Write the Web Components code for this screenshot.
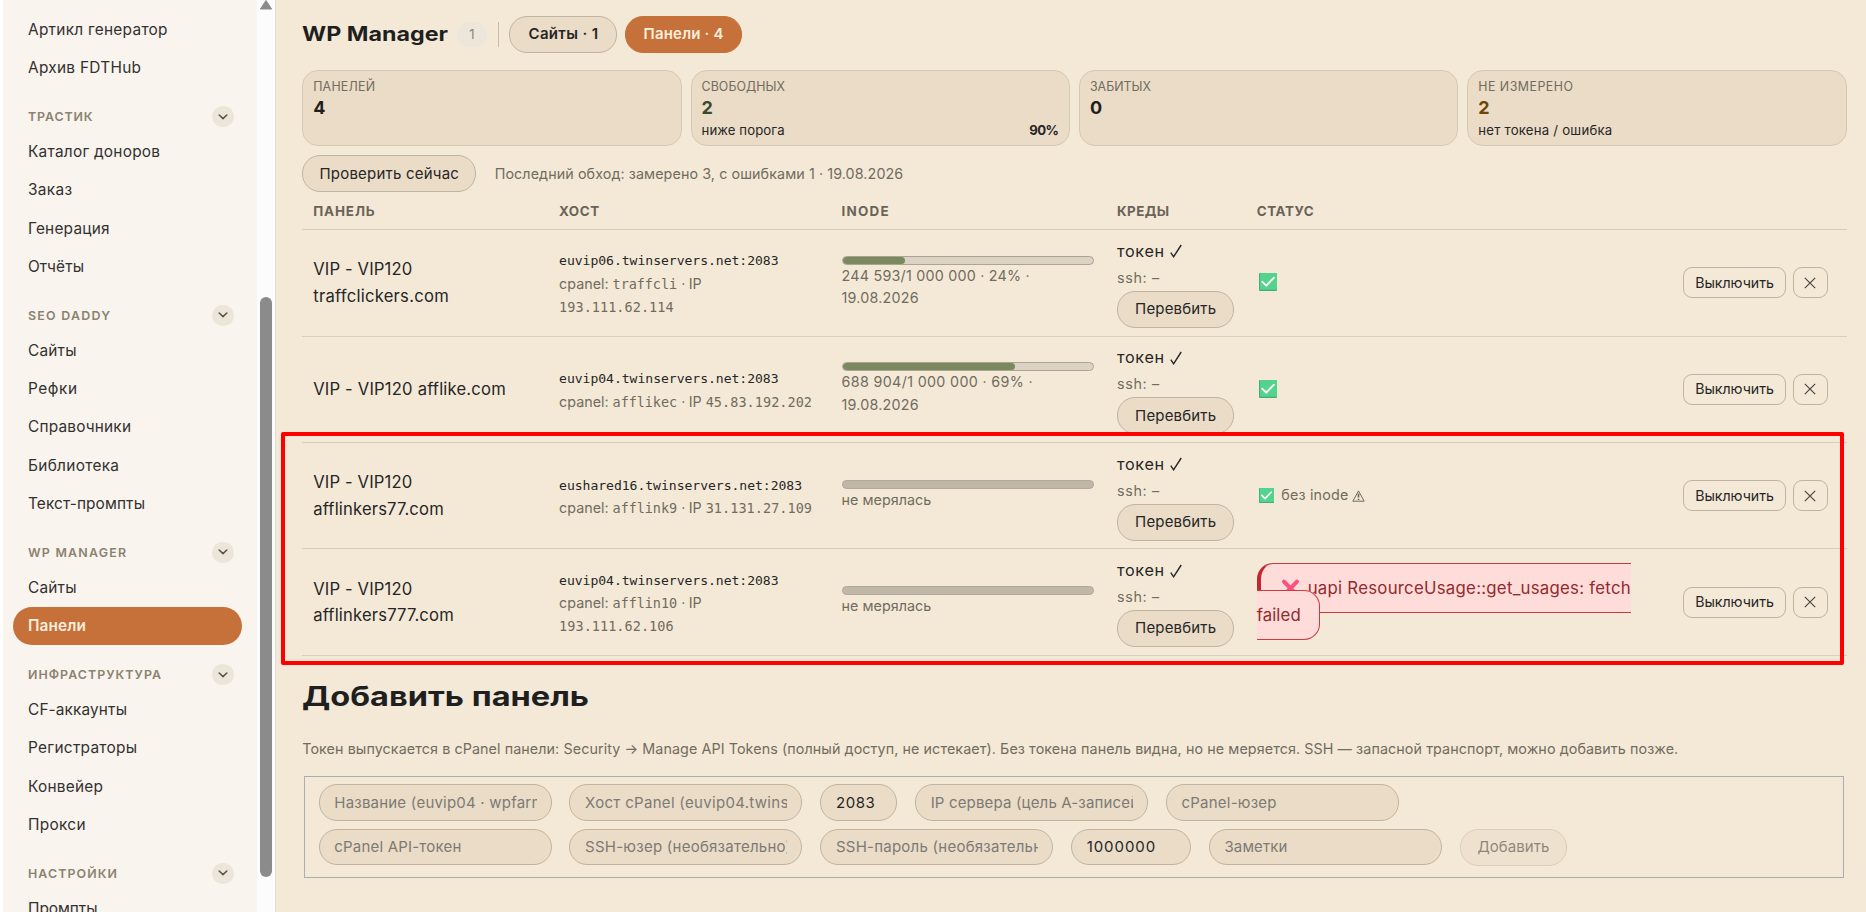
<!DOCTYPE html>
<html lang="ru">
<head>
<meta charset="utf-8">
<title>WP Manager</title>
<style>
  :root {
    --bg: #f4e9d7;
    --surface: #eadcc6;
    --ink: #262626;
    --muted: #716c60;
    --line: #d9cdbc;
    --edge: #c0b4a0;
    --accent: #c57139;
    --mono: "DejaVu Sans Mono", "Liberation Mono", monospace;
  }
  body {
    margin: 0;
    height: 912px;
    overflow: hidden;
    background: var(--bg);
    color: var(--ink);
    font: 16px/1.5 Inter, "Noto Sans", sans-serif;
  }
</style>
</head>
<body>
<wp-app></wp-app>

<script>
const define = (name, css, html, setup) => {
  const tmpl = document.createElement("template");
  customElements.define(name, class extends HTMLElement {
    constructor() {
      super();
      this.attachShadow({ mode: "open" });
    }
    connectedCallback() {
      if (this.shadowRoot.childNodes.length) return;
      tmpl.innerHTML = `<style>${css}</style>${typeof html === "function" ? html(this) : html}`;
      this.shadowRoot.appendChild(tmpl.content.cloneNode(true));
      if (setup) setup(this);
    }
  });
};

// shorthand for a tracked label: text + width in px
const t = (text, w, extra = "") => `<fit-text w="${w}" ${extra}>${text}</fit-text>`;

const NAV = [
  { items: [["Артикл генератор", 139.5], ["Архив FDTHub", 113]] },
  { title: ["ТРАСТИК", 64.5], items: [["Каталог доноров", 132], ["Заказ", 44], ["Генерация", 81.5], ["Отчёты", 56]] },
  { title: ["SEO DADDY", 82], items: [["Сайты", 48.5], ["Рефки", 49], ["Справочники", 103], ["Библиотека", 91], ["Текст-промпты", 117]] },
  { title: ["WP MANAGER", 98], items: [["Сайты", 48.5], ["Панели", 58, true]] },
  { title: ["ИНФРАСТРУКТУРА", 133], items: [["CF-аккаунты", 99], ["Регистраторы", 109], ["Конвейер", 75], ["Прокси", 57.5]] },
  { title: ["НАСТРОЙКИ", 89], items: [["Промпты", 69.5]] },
];

const ROWS = [
  {
    name: [["VIP - VIP120", 99], ["traffclickers.com", 135.5]],
    host: ["euvip06.twinservers.net:2083", 219.5],
    user: "traffcli", ip: "193.111.62.114", wrap: true,
    pct: 24.8, inode: [["244 593/1 000 000 · 24% ·", 188], ["19.08.2026", 77]],
    status: `<ok-mark></ok-mark>`,
  },
  {
    name: [["VIP - VIP120 afflike.com", 192.5]],
    host: ["euvip04.twinservers.net:2083", 219.5],
    user: "afflikec", ip: "45.83.192.202",
    pct: 69, inode: [["688 904/1 000 000 · 69% ·", 191], ["19.08.2026", 77]],
    status: `<ok-mark></ok-mark>`,
  },
  {
    name: [["VIP - VIP120", 99], ["afflinkers77.com", 130.5]],
    host: ["eushared16.twinservers.net:2083", 243],
    user: "afflink9", ip: "31.131.27.109",
    inode: [["не мерялась", 89.6]],
    status: `<ok-mark small></ok-mark><span class="note">${t("без inode", 67)}<warn-mark></warn-mark></span>`,
  },
  {
    name: [["VIP - VIP120", 99], ["afflinkers777.com", 140.5]],
    host: ["euvip04.twinservers.net:2083", 219.5],
    user: "afflin10", ip: "193.111.62.106", wrap: true,
    inode: [["не мерялась", 89.6]],
    status: `<status-error></status-error>`,
  },
];

define("nav-group", `
  :host { display: block; }
  header {
    display: flex;
    align-items: center;
    justify-content: space-between;
    height: 21.6px;
    padding: 19px 23.5px 5px 25px;
    color: #8b8270;
    font-size: 12.4px;
    font-weight: 600;
    line-height: 21px;
  }
  .toggle {
    display: flex;
    align-items: center;
    justify-content: center;
    width: 21.4px;
    height: 21.4px;
    border-radius: 50%;
    background: #ece5d9;
  }
`, el => `
  ${el.hasAttribute("w") ? `<header>${t(el.getAttribute("title"), el.getAttribute("w"))}
    <span class="toggle"><svg width="10" height="6" viewBox="0 0 10 6"><path d="M1.2 1 5 4.6 8.8 1" fill="none" stroke="#5c564b" stroke-width="1.6" stroke-linecap="round" stroke-linejoin="round"/></svg></span>
  </header>` : ""}
  <slot></slot>
`);

define("nav-item", `
  :host {
    display: flex;
    align-items: center;
    height: 38.3px;
    margin: 0 15px 0 10px;
    padding-left: 15px;
    border-radius: 19.5px;
    color: #333130;
    font-size: 15.4px;
  }
  :host([active]) {
    background: var(--accent);
    color: #fbeedd;
    font-weight: 600;
  }
`, `<slot></slot>`);

define("side-nav", `
  :host {
    display: flex;
    flex: none;
    box-sizing: border-box;
    width: 276px;
    height: 912px;
    overflow: hidden;
    padding-left: 3px;
    background: #fff;
    border-right: 1px solid #e2dbd0;
  }
  nav {
    width: 254px;
    padding-top: 10.2px;
    background: #f9f4ee;
  }
  .bar {
    display: flex;
    flex-direction: column;
    align-items: center;
    width: 18px;
    background: #fcfcfc;
  }
  .thumb {
    width: 11.4px;
    height: 580px;
    margin-top: 286.5px;
    border-radius: 6px;
    background: #8b8b8b;
  }
`, () => `
  <nav>${NAV.map(g => `
    <nav-group ${g.title ? `title="${g.title[0]}" w="${g.title[1]}"` : ""}>
      ${g.items.map(([text, w, active]) => `<nav-item ${active ? "active" : ""}>${t(text, w)}</nav-item>`).join("")}
    </nav-group>`).join("")}
  </nav>
  <div class="bar">
    <svg width="14" height="10" viewBox="0 0 14 10"><path d="M7 .5 12.6 9H1.4z" fill="#8b8b8b" stroke="#8b8b8b" stroke-linejoin="round"/></svg>
    <div class="thumb"></div>
  </div>
`);

define("pill-button", `
  :host {
    display: inline-flex;
    align-items: center;
    justify-content: center;
    box-sizing: border-box;
    height: 37px;
    border: 1px solid var(--edge);
    border-radius: 18px;
    background: var(--surface);
    font-size: 15px;
    line-height: 22px;
  }
  :host([tab]) { font-weight: 600; }
  :host([active]) {
    background: var(--accent);
    border-color: var(--accent);
    color: #fbeedd;
  }
  :host([disabled]) { opacity: 0.5; }
`, `<slot></slot>`);

define("small-button", `
  :host {
    display: flex;
    align-items: center;
    justify-content: center;
    box-sizing: border-box;
    height: 31px;
    border: 1px solid var(--edge);
    border-radius: 9px;
    font-size: 14.2px;
    line-height: 20px;
  }
`, `<slot></slot>`);

define("stat-card", `
  :host {
    display: flex;
    flex-direction: column;
    flex: 1;
    box-sizing: border-box;
    height: 76.3px;
    padding: 7px 10px 0;
    border: 1px solid #d6c9b3;
    border-radius: 16px;
    background: var(--surface);
  }
  .label { height: 18px; font-size: 12.4px; line-height: 18px; color: var(--muted); }
  .value { height: 24px; font-size: 18px; line-height: 24px; font-weight: 700; color: var(--tone, #1f1f1f); }
  .sub { display: flex; justify-content: space-between; height: 20px; font-size: 13.2px; line-height: 20px; }
`, el => `
  <div class="label">${t(el.getAttribute("label"), el.getAttribute("w"))}</div>
  <div class="value">${el.getAttribute("value")}</div>
  <div class="sub"><slot></slot></div>
`);

define("ok-mark", `
  :host { display: inline-flex; margin-left: 2.6px; padding-bottom: 1px; }
`, el => {
  const s = el.hasAttribute("small") ? 15 : 18;
  return `<svg width="${s}" height="${s}" viewBox="0 0 18 18">
    <rect width="18" height="18" rx="1" fill="#3fae78"/><rect x="1" width="17" height="16.8" rx="1" fill="#54d38d"/>
    <path d="M3.4 8.8 7.2 12.7 14.8 4.8" fill="none" stroke="#fff" stroke-width="1.9" stroke-linecap="round" stroke-linejoin="round"/></svg>`;
});

define("warn-mark", `
  :host { display: inline-flex; margin-left: 4px; }
`, `<svg width="13" height="12" viewBox="0 0 13 12"><path d="M6.5.9 12.2 11.2H.8z" fill="none" stroke="#716c60" stroke-width="1" stroke-linejoin="round"/><path d="M6.5 3.6v4M6.5 8.7v1.4" stroke="#716c60" stroke-width="1.7"/></svg>`);

// the message is an inline box on purpose: it breaks in two overlapping fragments
define("status-error", `
  :host { display: block; width: 375px; font-size: 16.8px; line-height: 26.6px; }
  span {
    padding: 14px 18.5px 14px 20px;
    border: 1px solid #cf3a40;
    border-left: 4px solid #c4272f;
    border-radius: 16px;
    background: #fedcd9;
    color: #932a2e;
  }
  svg { vertical-align: -3px; margin-right: 8px; }
`, `<span><svg width="19" height="18" viewBox="0 0 19 18"><path d="M3 2.6 16 16M16 2.6 3 16" stroke="#f9527f" stroke-width="4" stroke-linecap="round"/></svg>${t("uapi ResourceUsage::get_usages: fetch", 323)}<br>${t("failed", 44)}</span>`);

define("panel-row", `
  :host {
    display: grid;
    grid-template-columns: var(--cols);
    align-items: center;
    box-sizing: border-box;
    height: 106.4px;
    padding-left: 11px;
    border-bottom: 1px solid var(--line);
  }
  .name { font-size: 16.6px; line-height: 26.5px; }
  .host { padding-top: 3.4px; }
  .muted, .note { color: var(--muted); font-size: 14.3px; line-height: 22.8px; }
  .mono { font-family: var(--mono); font-size: 13.1px; line-height: 22.8px; }
  .muted .mono { font-size: 13.5px; }
  .meter {
    box-sizing: border-box;
    width: 252px;
    height: 9px;
    border: 1px solid #aca394;
    border-radius: 5px;
    background: #dcd3c4;
    overflow: hidden;
  }
  .meter.none { background: #c0b7a9; border-color: #b3a99a; }
  .meter i { display: block; height: 100%; border-radius: 4px; background: #7a8a5e; }
  .creds { display: flex; flex-direction: column; align-items: flex-start; }
  .token { display: flex; align-items: center; gap: 6px; height: 27px; font-size: 16.2px; line-height: 27px; margin-bottom: 2px; }
  .creds pill-button { width: 117px; margin-top: 1px; }
  .status { display: flex; align-items: center; }
  .note { display: flex; align-items: center; margin-left: 7px; }
  .actions { display: flex; gap: 7px; }
`, el => {
  const r = ROWS[el.getAttribute("index")];
  return `
  <div class="name">${r.name.map(n => t(...n)).join("<br>")}</div>
  <div class="host">
    <div class="mono">${t(...r.host)}</div>
    <div class="muted">${t("cpanel:", 49.5)} <span class="mono">${t(r.user, 64.5)}</span> ${t("· IP", 20.5)}${r.wrap ? "<br>" : " "}<span class="mono">${t(r.ip, r.ip.length * 8.18)}</span></div>
  </div>
  <div>
    <div class="meter ${r.pct ? "" : "none"}">${r.pct ? `<i style="width:${r.pct}%"></i>` : ""}</div>
    <div class="muted">${r.inode.map(n => t(...n)).join("<br>")}</div>
  </div>
  <div class="creds">
    <div class="token">${t("токен", 47)}<svg width="12" height="14" viewBox="0 0 12 14"><path d="M.8 8.6 3.6 12.8 11.2 1" fill="none" stroke="#262626" stroke-width="1.4"/></svg></div>
    <div class="muted">${t("ssh: –", 42)}</div>
    <pill-button>${t("Перевбить", 81)}</pill-button>
  </div>
  <div class="status">${r.status}</div>
  <div class="actions">
    <small-button style="width:102.4px">${t("Выключить", 78.7)}</small-button>
    <small-button style="width:35px"><svg width="12" height="12" viewBox="0 0 12 12"><path d="M.8.8 11.2 11.2M11.2.8.8 11.2" stroke="#4a4743" stroke-width="1.2"/></svg></small-button>
  </div>`;
});

define("panel-table", `
  :host {
    display: block;
    --cols: 245.9px 282.5px 275.5px 139.6px 426.7px 1fr;
  }
  .head {
    display: grid;
    grid-template-columns: var(--cols);
    align-items: center;
    box-sizing: border-box;
    height: 38px;
    padding-left: 11px;
    border-bottom: 1px solid var(--line);
    color: #69635a;
    font-size: 13.4px;
    font-weight: 700;
  }
`, () => `
  <div class="head">
    ${t("ПАНЕЛЬ", 61.5)}${t("ХОСТ", 40)}${t("INODE", 47)}${t("КРЕДЫ", 52)}${t("СТАТУС", 57)}
  </div>
  ${ROWS.map((_, i) => `<panel-row index="${i}"></panel-row>`).join("")}
`);

define("text-field", `
  :host {
    display: flex;
    align-items: center;
    box-sizing: border-box;
    width: 233px;
    height: 36.5px;
    padding: 0 14px 0 14.6px;
    border: 1px solid var(--edge);
    border-radius: 18px;
    background: var(--surface);
    color: #7d7a75;
    font-size: 15px;
  }
  :host([filled]) { color: var(--ink); }
  div { flex: 1; overflow: hidden; white-space: nowrap; line-height: 24px; }
`, `<div><slot></slot></div>`);

define("panel-form", `
  :host {
    display: flex;
    flex-direction: column;
    gap: 8.2px;
    box-sizing: border-box;
    height: 102px;
    margin: 0 2.6px 0 2px;
    padding: 7.2px 13.5px;
    border: 1.5px solid #abadb0;
  }
  div { display: flex; gap: 17.8px; }
`, `
  <div>
    <text-field>${t("Название (euvip04 · wpfarm)", 216)}</text-field>
    <text-field>${t("Хост cPanel (euvip04.twinservers.net)", 284)}</text-field>
    <text-field filled style="width:77px">${t("2083", 39)}</text-field>
    <text-field>${t("IP сервера (цель A-записей)", 214)}</text-field>
    <text-field>${t("cPanel-юзер", 95)}</text-field>
  </div>
  <div>
    <text-field>${t("cPanel API-токен", 127)}</text-field>
    <text-field>${t("SSH-юзер (необязательно)", 206)}</text-field>
    <text-field>${t("SSH-пароль (необязательно)", 221)}</text-field>
    <text-field filled style="width:120px">${t("1000000", 68.5)}</text-field>
    <text-field>${t("Заметки", 63)}</text-field>
    <pill-button disabled style="width:107.5px">${t("Добавить", 72)}</pill-button>
  </div>
`);

define("wp-app", `
  :host { display: flex; height: 912px; }
  main { flex: 1; min-width: 0; padding: 16.2px 19.4px 0 26.2px; }
  .top { display: flex; align-items: center; height: 36.6px; margin-bottom: 17.2px; }
  h1, h2, p { margin: 0; }
  h1 { font-size: 19.5px; line-height: 30px; font-weight: 700; color: #1f1f1f; }
  .badge {
    width: 29.5px;
    height: 25px;
    margin-left: 9px;
    border-radius: 13px;
    background: #ece6db;
    color: #8a857a;
    font-size: 13px;
    line-height: 25px;
    text-align: center;
  }
  .sep { width: 1px; height: 25px; margin: 0 10.6px 0 11px; background: #c9beac; }
  .top pill-button + pill-button { margin-left: 7.5px; }
  .cards { display: flex; gap: 9px; margin-bottom: 8.9px; }
  .check { display: flex; align-items: center; gap: 18.5px; height: 37px; color: var(--muted); font-size: 14.3px; }
  .check pill-button { width: 174px; color: var(--ink); }
  h2 { margin-top: 23.6px; font-size: 26.5px; line-height: 34px; font-weight: 700; color: #1f1f1f; }
  p { margin: 23.8px 0 15px; height: 24px; color: var(--muted); font-size: 14.3px; line-height: 24px; }
  .frame {
    position: absolute;
    left: 281px;
    top: 431.5px;
    box-sizing: border-box;
    width: 1562.5px;
    height: 233.5px;
    border: 4px solid #fe0000;
    border-radius: 2px;
  }
`, `
  <side-nav></side-nav>
  <main>
    <div class="top">
      <h1>${t("WP Manager", 146, "stretch")}</h1>
      <span class="badge">1</span>
      <span class="sep"></span>
      <pill-button tab style="width:108px">${t("Сайты · 1", 69.5)}</pill-button>
      <pill-button tab active style="width:117.5px">${t("Панели · 4", 80)}</pill-button>
    </div>
    <div class="cards">
      <stat-card label="ПАНЕЛЕЙ" w="61.8" value="4"></stat-card>
      <stat-card label="СВОБОДНЫХ" w="83.5" value="2" style="--tone:#3c4a2c">${t("ниже порога", 83)}<b>${t("90%", 29.6)}</b></stat-card>
      <stat-card label="ЗАБИТЫХ" w="61" value="0"></stat-card>
      <stat-card label="НЕ ИЗМЕРЕНО" w="94.7" value="2" style="--tone:#6e4607">${t("нет токена / ошибка", 134)}</stat-card>
    </div>
    <div class="check">
      <pill-button>${t("Проверить сейчас", 139.5)}</pill-button>
      ${t("Последний обход: замерено 3, с ошибками 1 · 19.08.2026", 408.5)}
    </div>
    <panel-table></panel-table>
    <h2>${t("Добавить панель", 287, "stretch")}</h2>
    <p>${t("Токен выпускается в cPanel панели: Security → Manage API Tokens (полный доступ, не истекает). Без токена панель видна, но не меряется. SSH — запасной транспорт, можно добавить позже.", 1376)}</p>
    <panel-form></panel-form>
  </main>
  <div class="frame"></div>
`);

// Sets its text to the given width, by tracking or (stretch) by widening the glyphs.
// Defined last so everything around it already has its fonts.
define("fit-text", `
  :host { display: inline-block; white-space: nowrap; }
  span { display: inline-block; transform-origin: 0 50%; }
`, `<span><slot></slot></span>`, el => {
  const span = el.shadowRoot.querySelector("span");
  const w = parseFloat(el.getAttribute("w"));
  const natural = span.getBoundingClientRect().width;
  if (el.hasAttribute("stretch")) {
    span.style.transform = `scaleX(${w / natural})`;
  } else {
    span.style.letterSpacing = `${(w - natural) / (el.textContent.length - 1)}px`;
  }
  el.style.width = `${w}px`;
});
</script>
</body>
</html>
